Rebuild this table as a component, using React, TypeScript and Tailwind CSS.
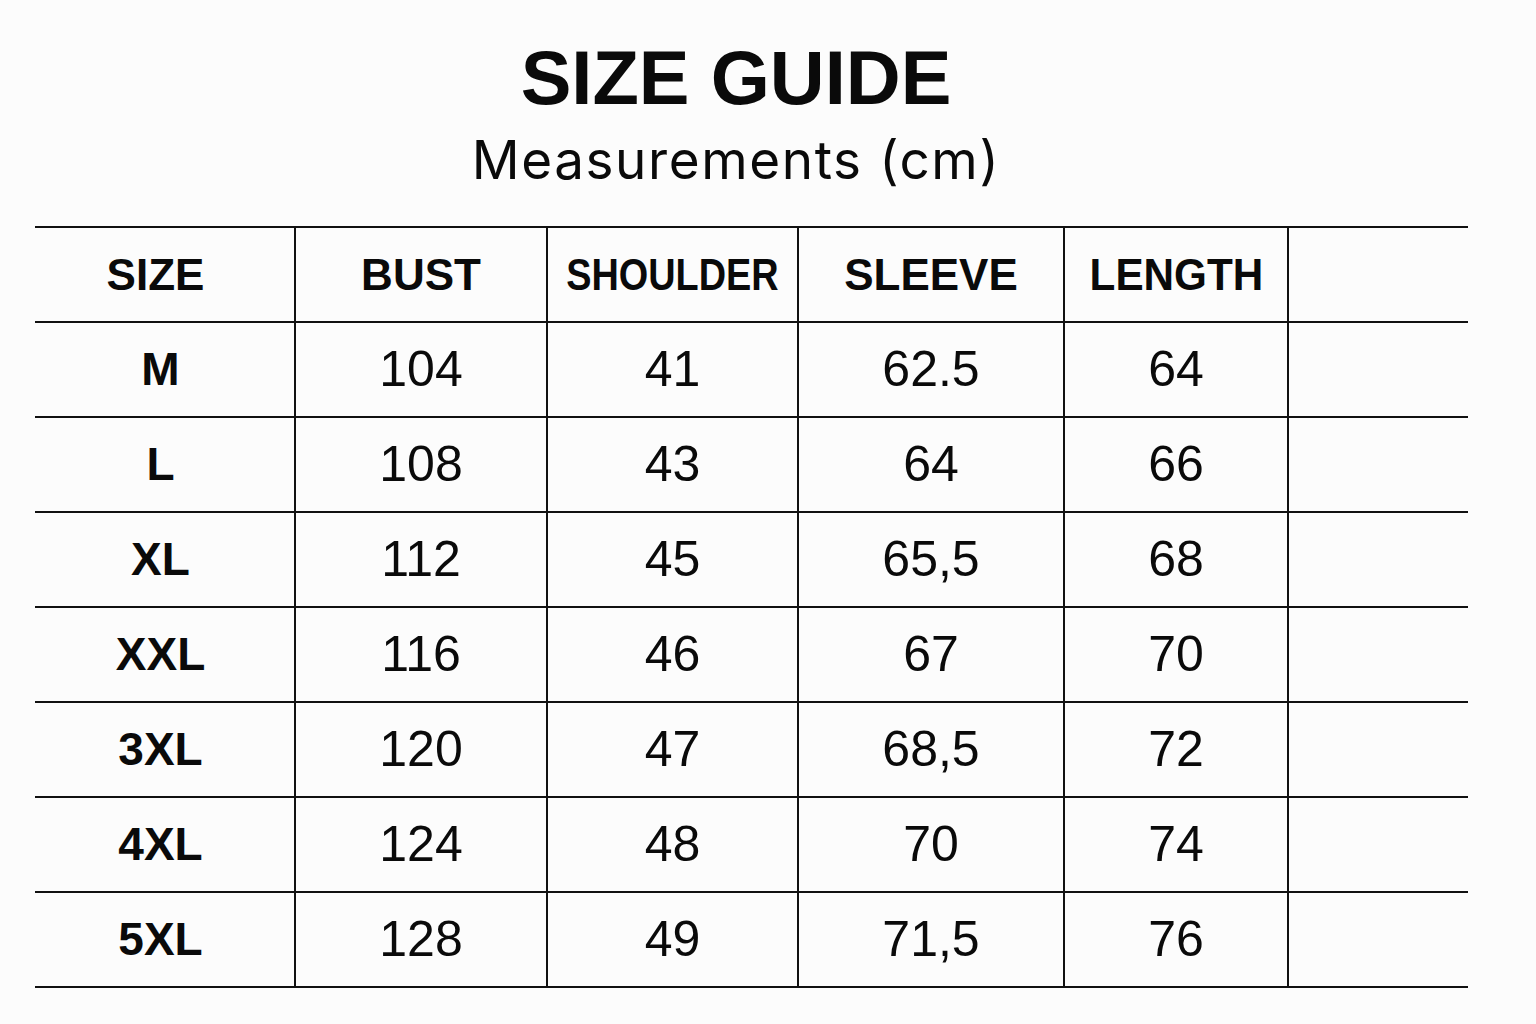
import React from "react";

const rows = [
  ["M", "104", "41", "62.5", "64"],
  ["L", "108", "43", "64", "66"],
  ["XL", "112", "45", "65,5", "68"],
  ["XXL", "116", "46", "67", "70"],
  ["3XL", "120", "47", "68,5", "72"],
  ["4XL", "124", "48", "70", "74"],
  ["5XL", "128", "49", "71,5", "76"],
];

const grid = "grid grid-cols-[261px_252px_251px_266px_224px_179px] border-b-2 border-[#111]";

export default function App() {
  return (
    <div className="w-[1536px] h-[1024px] bg-[#fcfcfc] text-[#0a0a0a] overflow-hidden" style={{ fontFamily: '"Liberation Sans", Arial, sans-serif' }}>
      <div className="pt-[40px] pr-[64px] flex flex-col items-center">
        <div className="text-[76px] leading-[76px] font-bold">SIZE GUIDE</div>
        <div className="mt-[18px] text-[53px] leading-[53px] tracking-[1.6px]" style={{ fontFamily: 'Inter, "Liberation Sans", sans-serif' }}>
          Measurements (cm)
        </div>
      </div>
      <div className="ml-[35px] mt-[39px] w-[1433px]">
        <div className={grid + " h-[97px] border-t-2"}>
          <div className="border-r-2 border-[#111] flex items-center justify-center pr-[18px] text-[44px] font-bold">SIZE</div>
          <div className="border-r-2 border-[#111] flex items-center justify-center text-[44px] font-bold">BUST</div>
          <div className="border-r-2 border-[#111] flex items-center justify-center text-[44px] font-bold">
            <span className="inline-block scale-x-[0.86]">SHOULDER</span>
          </div>
          <div className="border-r-2 border-[#111] flex items-center justify-center text-[44px] font-bold">SLEEVE</div>
          <div className="border-r-2 border-[#111] flex items-center justify-center text-[44px] font-bold">
            <span className="inline-block scale-x-[0.96]">LENGTH</span>
          </div>
          <div />
        </div>
        {rows.map((r) => (
          <div key={r[0]} className={grid + " h-[95px]"}>
            <div className="border-r-2 border-[#111] flex items-center justify-center pr-[8px] text-[46px] font-bold">{r[0]}</div>
            <div className="border-r-2 border-[#111] flex items-center justify-center text-[50px]">{r[1]}</div>
            <div className="border-r-2 border-[#111] flex items-center justify-center text-[50px]">{r[2]}</div>
            <div className="border-r-2 border-[#111] flex items-center justify-center text-[50px]">{r[3]}</div>
            <div className="border-r-2 border-[#111] flex items-center justify-center text-[50px]">{r[4]}</div>
            <div />
          </div>
        ))}
      </div>
    </div>
  );
}
